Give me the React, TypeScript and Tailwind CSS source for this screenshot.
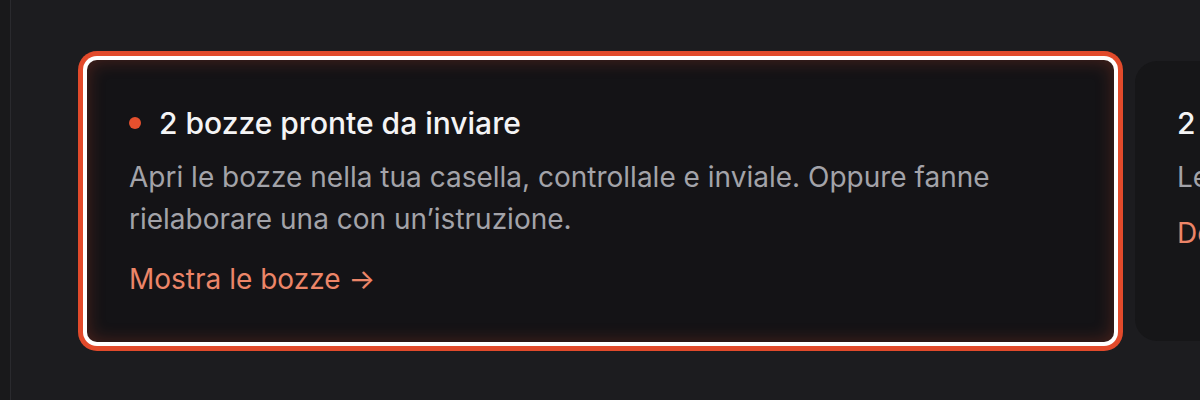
import React from 'react';

type Nudge = {
  id: string;
  title: string;
  body: string;
  cta: string;
  active?: boolean;
};

const nudges: Nudge[] = [
  {
    id: 'drafts',
    title: '2 bozze pronte da inviare',
    body: 'Apri le bozze nella tua casella, controllale e inviale. Oppure fanne rielaborare una con un’istruzione.',
    cta: 'Mostra le bozze',
    active: true,
  },
  {
    id: 'followups',
    title: '2 risposte in attesa',
    body: 'Le conversazioni senza risposta da più di tre giorni.',
    cta: 'Dettagli',
  },
];

const NudgeCard: React.FC<{ nudge: Nudge }> = ({ nudge }) => {
  return (
    <div
      className={
        nudge.active
          ? 'shrink-0 w-[1027px] h-[282px] rounded-[10px] bg-[#141316] px-[42px] pt-[42px] ring-[5px] ring-[#e24a2b] ring-offset-[4px] ring-offset-white shadow-[inset_0_0_18px_rgba(226,74,43,0.28)]'
          : 'shrink-0 w-[1024px] h-[280px] mt-[1px] rounded-[22px] bg-[#161618] px-[42px] pt-[41px]'
      }
    >
      <div className="flex items-center gap-[18px] h-[42px]">
        {nudge.active && <span className="w-[12px] h-[12px] rounded-full bg-[#e5502e] shrink-0" />}
        <h3 className="text-[30px] leading-[42px] font-medium text-[#f4f4f5] whitespace-nowrap">{nudge.title}</h3>
      </div>
      <p className="mt-[12px] text-[28px] leading-[42px] text-[#a3a3a9]">{nudge.body}</p>
      <a
        className={
          nudge.active
            ? 'mt-[20px] block text-[28px] leading-[38px] text-[#ec8568] whitespace-nowrap'
            : 'mt-[16px] block text-[28px] leading-[38px] text-[#ec8568] whitespace-nowrap'
        }
      >
        {nudge.cta} →
      </a>
    </div>
  );
};

const App: React.FC = () => {
  return (
    <div
      className="h-screen w-full flex bg-[#1c1c1f] overflow-hidden"
      style={{ fontFamily: 'Inter, "Noto Sans", sans-serif' }}
    >
      {/* sidebar edge */}
      <div className="w-[11px] shrink-0 bg-[#19191b] border-r border-[#2a2a2e]" />
      <main className="flex-1 min-w-0 pl-[76px] pt-[60px] overflow-hidden">
        <div className="flex items-start gap-[21px]">
          {nudges.map((n) => (
            <NudgeCard key={n.id} nudge={n} />
          ))}
        </div>
      </main>
    </div>
  );
};

export default App;
